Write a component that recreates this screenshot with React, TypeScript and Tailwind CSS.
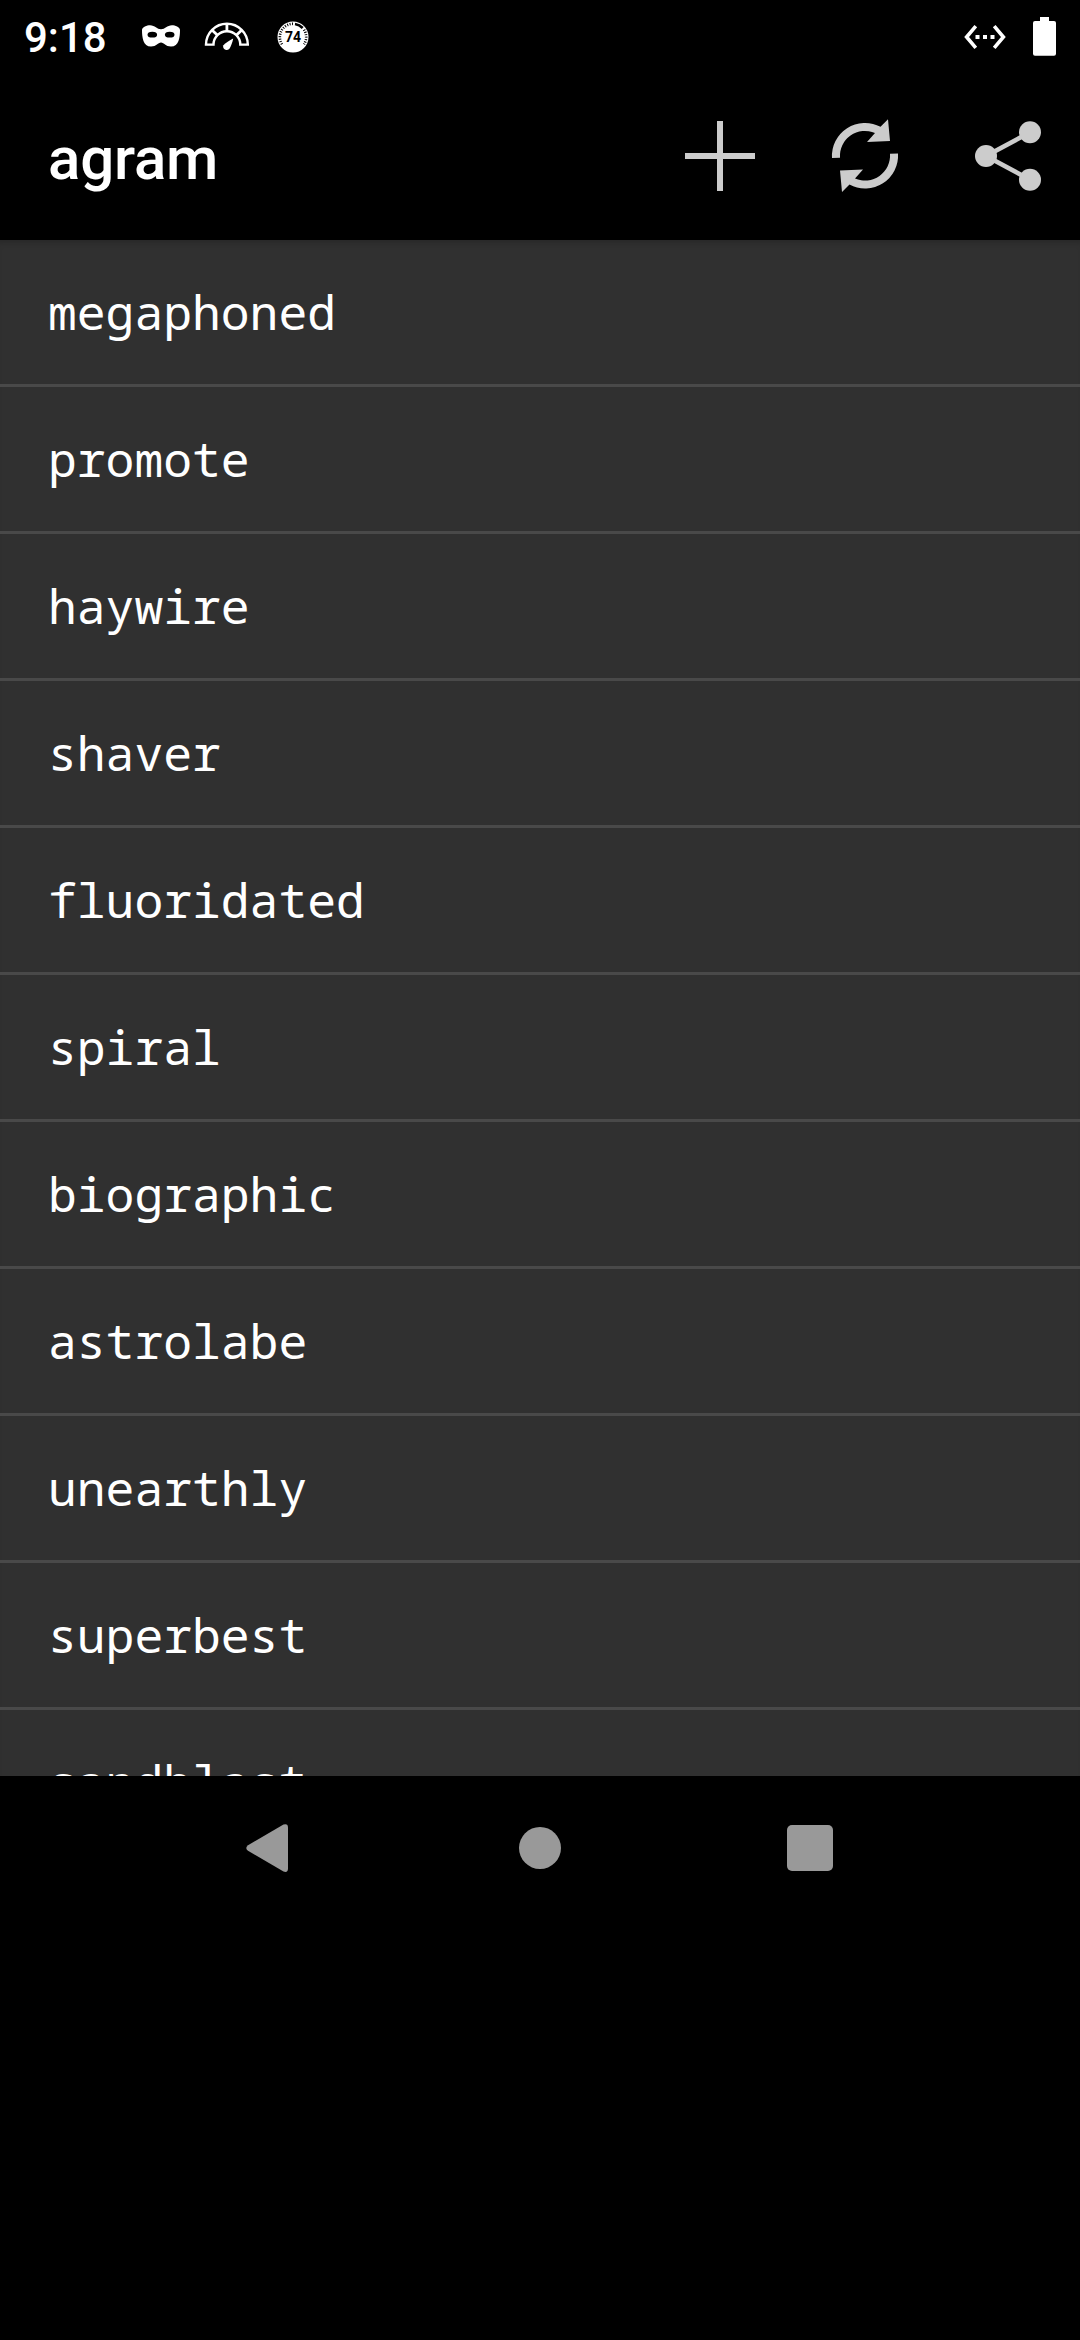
const words = [
  'megaphoned',
  'promote',
  'haywire',
  'shaver',
  'fluoridated',
  'spiral',
  'biographic',
  'astrolabe',
  'unearthly',
  'superbest',
  'sandblast',
];

function MaskIcon() {
  return (
    <svg className="h-[26px] w-[40px]" viewBox="0 0 40 26" aria-hidden="true">
      <path
        fill="#fff"
        d="M9 2.300C14 2.300 16 6.300 20 6.300S26 2.300 31 2.300C34 2.300 39 4 39 7C39 14 38 23.600 30 23.600C24.500 23.600 23 19.600 20 19.600S15.500 23.600 10 23.600C2 23.600 1 14 1 7C1 4 6 2.300 9 2.300Z"
      />
      <ellipse cx="11.300" cy="11.700" rx="4.800" ry="2.900" />
      <ellipse cx="28.700" cy="11.700" rx="4.800" ry="2.900" />
    </svg>
  );
}

function GaugeIcon() {
  return (
    <svg className="h-[30px] w-[46px]" viewBox="0 0 46 30" fill="none" stroke="#fff" aria-hidden="true">
      <path strokeWidth="2.400" d="M2 22.600A20.800 20.800 0 0 1 43.800 22.600H36.300A13.400 13.400 0 0 0 9.500 22.600Z" />
      <path strokeWidth="2.800" d="M22.900 2V9.500M8.200 8.200L13.500 13.200M37.600 8.200L32.300 13.200" />
      <path
        fill="#fff"
        stroke="none"
        d="M29.200 16.500C28.600 20 27 23.800 25.800 26.200A3.600 3.600 0 0 1 19.200 23.600C21.500 21 25.600 18 29.200 16.500Z"
      />
    </svg>
  );
}

function ScoreBadge() {
  return (
    <div className="relative flex h-[32px] w-[32px] items-center justify-center">
      <svg className="absolute inset-0 h-[32px] w-[32px]" viewBox="0 0 32 32" fill="none" aria-hidden="true">
        <circle cx="16" cy="16" r="15.500" fill="#fff" />
        <path
          stroke="#000"
          strokeWidth="2.600"
          strokeDasharray="1 1.450"
          d="M5 23.200A13.200 13.200 0 0 1 16 2.800"
        />
        <path stroke="#000" strokeWidth="2.600" d="M18 2.950A13.200 13.200 0 0 1 25.700 7" />
        <path
          stroke="#000"
          strokeWidth="2.600"
          strokeDasharray="1 1.450"
          d="M27 8.700A13.200 13.200 0 0 1 27 23.200"
        />
      </svg>
      <span className="relative font-[Roboto] text-[14px] leading-none font-bold text-black">74</span>
    </div>
  );
}

function EthernetIcon() {
  return (
    <svg className="h-[26px] w-[42px]" viewBox="0 0 42 26" fill="none" stroke="#fff" aria-hidden="true">
      <path strokeWidth="3.600" d="M11.800 2.200L2.600 13L11.800 23.800M30.200 2.200L39.400 13L30.200 23.800" />
      <path fill="#fff" stroke="none" d="M11.500 11h4v4h-4zM19 11h4v4h-4zM26.500 11h4v4h-4z" />
    </svg>
  );
}

function BatteryIcon() {
  return (
    <svg className="h-[39px] w-[23px]" viewBox="0 0 23 39" fill="#fff" aria-hidden="true">
      <rect x="7" width="9" height="8" />
      <rect y="4" width="23" height="34.700" rx="2" />
    </svg>
  );
}

function StatusBar() {
  return (
    <div className="flex h-[72px] items-center pr-6 pl-6">
      <span className="w-[117px] pt-1 font-[Roboto] text-[42px] leading-[48px] font-medium">9:18</span>
      <MaskIcon />
      <div className="ml-[23px] pt-0.5">
        <GaugeIcon />
      </div>
      <div className="ml-[27px] pt-px">
        <ScoreBadge />
      </div>
      <div className="ml-auto flex items-center gap-[27px]">
        <div className="pt-px">
          <EthernetIcon />
        </div>
        <BatteryIcon />
      </div>
    </div>
  );
}

function AddIcon() {
  return (
    <svg className="size-24" viewBox="0 0 96 96" fill="#ccc" aria-hidden="true">
      <path d="M45 13h6v32h32v6h-32v32h-6v-32h-32v-6h32z" />
    </svg>
  );
}

function RefreshIcon() {
  const arrow =
    'M16 50A33 33 0 0 1 64.500 18.800L72 11.300L74 33L51 34L59 25A25 25 0 0 0 24 49.700Z';
  return (
    <svg className="size-24" viewBox="0 0 96 96" fill="#ccc" aria-hidden="true">
      <path d={arrow} />
      <path d={arrow} transform="rotate(180 49 47.700)" />
    </svg>
  );
}

function ShareIcon() {
  return (
    <svg className="size-24" viewBox="0 0 96 96" fill="#ccc" aria-hidden="true">
      <path d="M70 24.300L26 48L70 71.700" fill="none" stroke="#ccc" strokeWidth="4.600" />
      <circle cx="70" cy="24.300" r="11" />
      <circle cx="26" cy="48" r="11" />
      <circle cx="70" cy="71.700" r="11" />
    </svg>
  );
}

function AppBar() {
  return (
    <header className="flex h-[168px] items-center pl-12">
      <h1 className="grow pt-[5px] font-[Roboto] text-[60px] leading-[70px] font-medium tracking-[-0.2px]">
        agram
      </h1>
      {[AddIcon, RefreshIcon, ShareIcon].map((Icon, index) => (
        <button key={index} className="flex h-full w-36 items-center justify-center">
          <Icon />
        </button>
      ))}
    </header>
  );
}

function WordList() {
  return (
    <ul className="h-[1536px] overflow-hidden bg-[#303030] shadow-[inset_0_6px_6px_-4px_rgba(0,0,0,0.2)]">
      {words.map((word) => (
        <li
          key={word}
          className="h-[147px] border-b-[3px] border-[#494949] pl-12 font-['Noto_Sans_Mono',monospace] text-[48px] leading-[144px]"
        >
          {word}
        </li>
      ))}
    </ul>
  );
}

function NavigationBar() {
  return (
    <nav className="grid h-36 grid-cols-3 px-[135px]">
      <button className="flex items-center justify-center pr-1.5">
        <svg className="h-12 w-[42px]" viewBox="0 0 42 48" fill="#999" aria-hidden="true">
          <path d="M42 3.500V44.500Q42 49 37.500 47.500L2 26.800Q-1.500 24 2 21.200L37.500 .500Q42 -1 42 3.500Z" />
        </svg>
      </button>
      <button className="flex items-center justify-center">
        <span className="size-[42px] rounded-full bg-[#999]" />
      </button>
      <button className="flex items-center justify-center">
        <span className="size-[46px] rounded-[5px] bg-[#999]" />
      </button>
    </nav>
  );
}

export default function App() {
  return (
    <div className="h-[2340px] w-[1080px] overflow-hidden bg-black text-white">
      <StatusBar />
      <AppBar />
      <WordList />
      <NavigationBar />
    </div>
  );
}
